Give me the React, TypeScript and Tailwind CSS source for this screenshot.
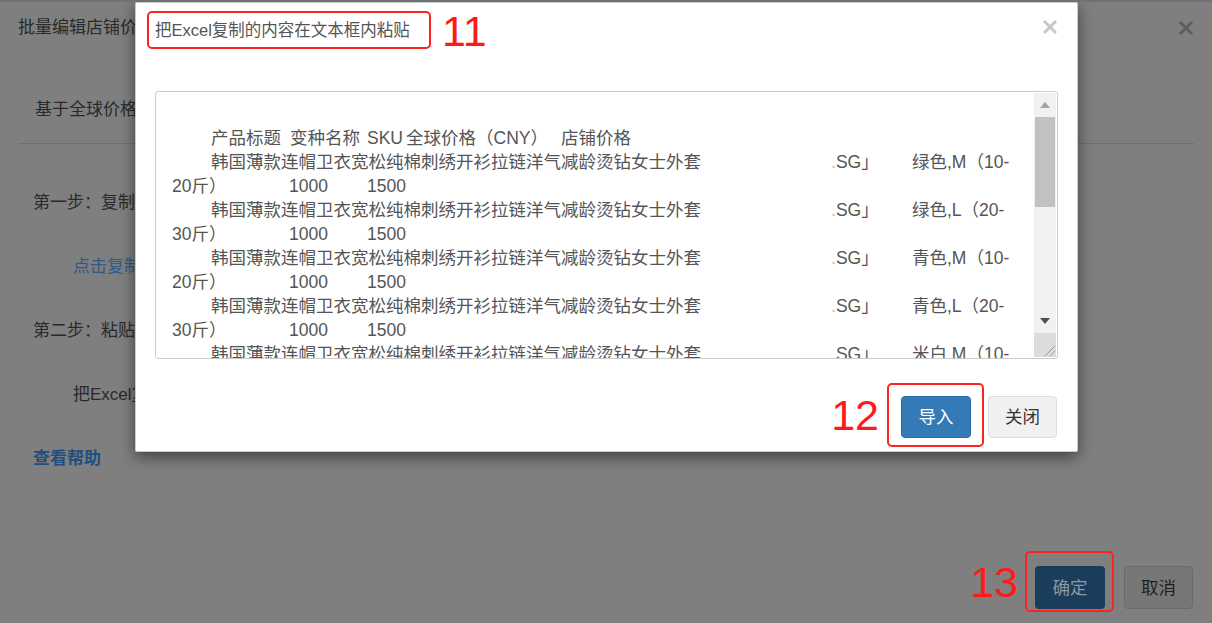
const rows = [
  { color: '绿色,M（10-', weight: '20斤）' },
  { color: '绿色,L（20-', weight: '30斤）' },
  { color: '青色,M（10-', weight: '20斤）' },
  { color: '青色,L（20-', weight: '30斤）' },
  { color: '米白,M（10-', weight: '20斤）' },
]

const title = '韩国薄款连帽卫衣宽松纯棉刺绣开衫拉链洋气减龄烫钻女士外套'

function Close({ color }: { color: string }) {
  return (
    <svg width="14" height="14" viewBox="0 0 14 14">
      <path d="M2 2 L12 12 M12 2 L2 12" stroke={color} strokeWidth="3" strokeLinecap="square" />
    </svg>
  )
}

function PasteBox() {
  return (
    <div className="mx-[19px] mt-[42px] flex h-[268px] rounded-[3px] border border-[#cccccc]">
      <div className="flex-1 overflow-hidden pl-[16px] pt-[10px] text-[17.5px] leading-[24px] text-[#555555] whitespace-nowrap">
        <div className="h-[24px]" />
        <div>
          <span className="inline-block w-[39px]" />
          <span className="inline-block w-[79px]">产品标题</span>
          <span className="inline-block w-[77px]">变种名称</span>
          <span className="inline-block w-[39px]">SKU</span>
          <span className="inline-block w-[155px]">全球价格（CNY）</span>
          <span>店铺价格</span>
        </div>
        {rows.map((r, i) => (
          <div key={i}>
            <div>
              <span className="inline-block w-[39px]" />
              <span className="inline-block w-[620px]">{title}</span>
              <span className="inline-block w-[81px]">
                <span className="text-[#bbbbbb]">.</span>SG」
              </span>
              <span>{r.color}</span>
            </div>
            <div>
              <span className="inline-block w-[117px]">{r.weight}</span>
              <span className="inline-block w-[78px]">1000</span>
              <span>1500</span>
            </div>
          </div>
        ))}
      </div>
      <div className="my-px mr-px flex w-[22px] flex-col bg-[#f1f1f1]">
        <div className="flex h-[24px] items-center justify-center">
          <svg width="10" height="6" viewBox="0 0 10 6"><path d="M5 0 L10 6 L0 6 Z" fill="#a3a3a3" /></svg>
        </div>
        <div className="mx-px h-[90px] bg-[#c1c1c1]" />
        <div className="flex-1" />
        <div className="flex h-[24px] items-center justify-center">
          <svg width="10" height="6" viewBox="0 0 10 6"><path d="M0 0 L10 0 L5 6 Z" fill="#505050" /></svg>
        </div>
        <div className="flex h-[24px] items-end justify-end bg-[#dcdcdc]">
          <svg width="14" height="14" viewBox="0 0 14 14">
            <path d="M3 13 L13 3 M8 13 L13 8" stroke="#9a9a9a" strokeWidth="1" />
          </svg>
        </div>
      </div>
    </div>
  )
}

function ImportDialog() {
  return (
    <div className="absolute left-[135px] top-0 flex h-[450px] w-[943px] flex-col rounded-[2px] border border-black/20 bg-white shadow-[0_5px_15px_rgba(0,0,0,0.5)]">
      <div className="flex h-[38px] items-start pl-[11px] pr-[20px] mt-[8px]">
        <div className="flex h-[38px] w-[284px] items-center rounded-[5px] border-2 border-[#ff2222] px-[6px] text-[16.5px] text-[#555555]">
          把Excel复制的内容在文本框内粘贴
        </div>
        <span className="ml-[11px] mt-[-1px] text-[43px] leading-none text-[#ff1a1a]">11</span>
        <div className="ml-auto mt-[9px]">
          <Close color="#c8c8c8" />
        </div>
      </div>
      <PasteBox />
      <div className="mt-[24px] flex items-start justify-end pr-[20px]">
        <span className="mr-[8px] mt-[11px] text-[43px] leading-none text-[#ff1a1a]">12</span>
        <div className="rounded-[5px] border-2 border-[#ff2222] pb-[7px] pl-[12px] pr-[11px] pt-[11px]">
          <button className="flex h-[42px] w-[70px] items-center justify-center rounded-[4px] border border-[#2e6da4] bg-[#337ab7] text-[17.5px] text-white">
            导入
          </button>
        </div>
        <button className="ml-[4px] mt-[13px] flex h-[42px] w-[69px] items-center justify-center rounded-[4px] border border-[#dddddd] bg-[#f0f0f0] text-[17.5px] text-[#333333]">
          关闭
        </button>
      </div>
    </div>
  )
}

export default function App() {
  return (
    <div className="relative h-[623px] w-[1212px] overflow-hidden border-t-2 border-[#6e7277] bg-[#7f7f7f] font-['Liberation_Sans','Noto_Sans_CJK_SC',sans-serif] text-[17px] leading-[24px] text-[#2a2a2a]">
      <div className="flex items-center justify-between pl-[18px] pr-[19px] pt-[14px]">
        <span>批量编辑店铺价格</span>
        <Close color="#5e5e5e" />
      </div>
      <div className="mx-[18px] mt-[58px] border-b border-[#6f6f6f] pb-[21px] pl-[17px]">
        基于全球价格批量调整店铺价格
      </div>
      <div className="mt-[47px] pl-[33px]">第一步：复制模板内容到Excel中编辑</div>
      <div className="mt-[40px] pl-[73px] text-[#2f5a86]">点击复制模板内容</div>
      <div className="mt-[40px] pl-[33px]">第二步：粘贴编辑好的内容</div>
      <div className="mt-[40px] pl-[73px]">把Excel复制的内容在文本框内粘贴</div>
      <div className="mt-[40px] pl-[33px] font-bold text-[#204f7e]">查看帮助</div>
      <div className="mt-[80px] flex items-start justify-end pr-[19px]">
        <span className="mr-[7px] mt-[10px] text-[43px] leading-none text-[#ff1a1a]">13</span>
        <div className="rounded-[5px] border-2 border-[#ff2222] pb-px pl-[8px] pr-[7px] pt-[13px]">
          <button className="flex h-[43px] w-[70px] items-center justify-center rounded-[4px] bg-[#1b3d5c] text-[17.5px] text-[#8a98a6]">
            确定
          </button>
        </div>
        <button className="ml-[10px] mt-[15px] flex h-[43px] w-[69px] items-center justify-center rounded-[4px] border border-[#6a6a6a] bg-[#777777] text-[17.5px] text-[#1f1f1f]">
          取消
        </button>
      </div>
      <ImportDialog />
    </div>
  )
}
